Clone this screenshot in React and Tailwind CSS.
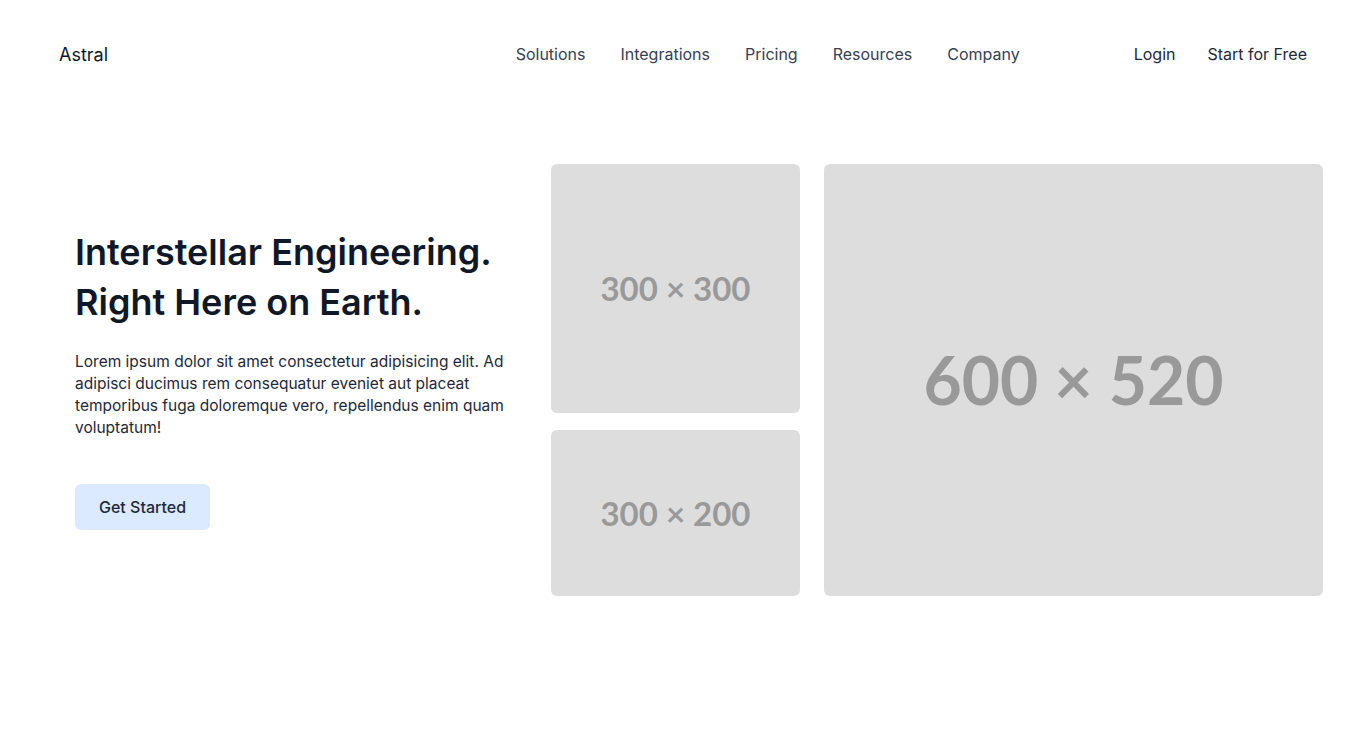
const links = ["Solutions", "Integrations", "Pricing", "Resources", "Company"];

function Placeholder({ label, className, textClass }) {
  return (
    <div className={`flex items-center justify-center rounded-md bg-[#dddddd] ${className}`}>
      <span className={`font-['Lato',sans-serif] font-bold leading-none text-[#999999] ${textClass}`}>{label}</span>
    </div>
  );
}

export default function App() {
  return (
    <div className="min-h-screen bg-white font-['Inter',sans-serif]">
      <header className="flex items-center h-[108px] px-[59px]">
        <a className="text-[18px] text-gray-900">Astral</a>
        <nav className="ml-auto flex items-center gap-[35px] text-[16px] text-gray-700">
          {links.map((l) => (
            <a key={l}>{l}</a>
          ))}
        </nav>
        <div className="ml-[114px] flex items-center gap-8 text-[16px] text-gray-800">
          <a>Login</a>
          <a>Start for Free</a>
        </div>
      </header>

      <section className="flex items-center gap-6 px-[43px] pt-[56px]">
        <div className="w-[484px] shrink-0 pl-8 pb-[3px]">
          <h1 className="text-[36px] leading-[50px] font-semibold text-gray-900">
            Interstellar Engineering.
            <br />
            Right Here on Earth.
          </h1>
          <p className="mt-[24px] pr-4 text-[15.5px] leading-[22px] text-gray-800">
            Lorem ipsum dolor sit amet consectetur adipisicing elit. Ad adipisci ducimus rem consequatur
            eveniet aut placeat temporibus fuga doloremque vero, repellendus enim quam voluptatum!
          </p>
          <button className="mt-[45px] h-[46px] px-6 rounded-md bg-blue-100 text-[16px] font-medium text-gray-800">
            Get Started
          </button>
        </div>

        <div className="flex flex-1 gap-6">
          <div className="flex w-[249px] flex-col gap-[17px]">
            <Placeholder label="300 × 300" className="h-[249px]" textClass="text-[33px]" />
            <Placeholder label="300 × 200" className="h-[166px]" textClass="text-[33px]" />
          </div>
          <Placeholder label="600 × 520" className="h-[432px] flex-1" textClass="text-[66px]" />
        </div>
      </section>
    </div>
  );
}
